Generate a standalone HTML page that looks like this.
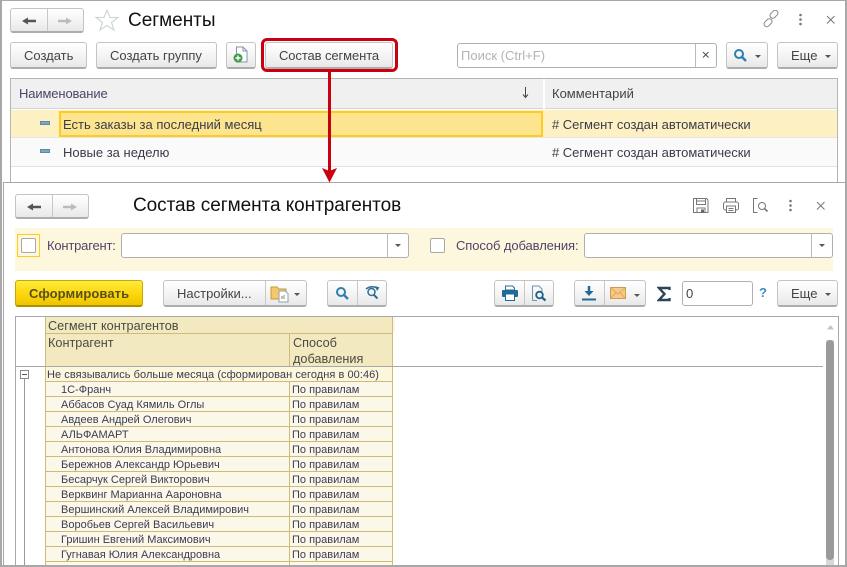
<!DOCTYPE html>
<html><head><meta charset="utf-8"><style>
html,body{margin:0;padding:0;background:#fff}
#p{position:relative;width:847px;height:567px;overflow:hidden;background:#fff;font-family:"Liberation Sans",sans-serif;color:#4a4a4a}
#p div,#p span,#p svg{position:absolute;box-sizing:border-box}
.t{white-space:nowrap;line-height:16px}
.b{background:linear-gradient(#fff,#f6f6f6 45%,#e8e8e8);border:1px solid #c4c4c4;border-bottom:2px solid #adadad;border-radius:3px}
.f{font-size:13px;color:#444;margin-top:1px}
.r{left:45px;width:348px;height:15px;background:#fbf8ea;border-bottom:1px solid #cdbb76;border-right:1px solid #cdbb76;border-left:1px solid #cdbb76;font-size:11px;line-height:15px;color:#3c3c50;white-space:nowrap}
.r i{position:absolute;font-style:normal;left:15px;top:1px}
.r b{position:absolute;font-weight:normal;left:246px;top:1px}
.r u{position:absolute;left:243px;top:0;width:1px;height:15px;background:#cdbb76}
.in{background:#fff;border:1px solid #b0b0b0;border-radius:3px}
.v{width:1px;background:#c8c8c8}
.ar{width:0;height:0;border-left:3px solid transparent;border-right:3px solid transparent;border-top:3px solid #555}
.h{font-size:12.700px;color:#4a4a44;line-height:16px}
</style></head><body><div id="p">

<!-- window 1 frame -->
<div style="left:0;top:0;width:847px;height:182px;border:2px solid #a8a8a8;border-top-width:1px;border-bottom:0"></div>

<div class="b" style="left:10px;top:8px;width:74px;height:25px"></div>
<div class="v" style="left:47px;top:9px;height:22px"></div>
<svg style="left:20px;top:14px" width="60" height="14"><path d="M5 7H16" stroke="#555" stroke-width="2.500"/><path d="M2 7L8 3.500V10.500Z" fill="#555"/><path d="M38 7H49" stroke="#bbb" stroke-width="2.500"/><path d="M52 7L46 3.500V10.500Z" fill="#bbb"/></svg>
<svg style="left:94px;top:8px" width="26" height="24"><path d="M13 2L16 9.500H24L17.500 14.500L20 22L13 17.500L6 22L8.500 14.500L2 9.500H10Z" fill="none" stroke="#d0d7da" stroke-width="1.200"/></svg>
<div class="t" style="left:128px;top:11px;font-size:19px;line-height:20px;color:#111;letter-spacing:-.03px">Сегменты</div>

<svg style="left:762px;top:10px" width="18" height="18" fill="none" stroke="#8a8a8a" stroke-width="1"><rect x="7.500" y="1.500" width="9" height="5.500" rx="2.700" transform="rotate(-45 12 4.300)"/><rect x="1.500" y="10" width="9" height="5.500" rx="2.700" transform="rotate(-45 6 12.700)"/></svg>
<svg style="left:798px;top:13px" width="5" height="14" fill="#777"><circle cx="2.500" cy="2" r="1.300"/><circle cx="2.500" cy="6.500" r="1.300"/><circle cx="2.500" cy="11" r="1.300"/></svg>
<svg style="left:826px;top:15px" width="10" height="10" stroke="#777" stroke-width="1"><path d="M1 1L8.500 8.500M8.500 1L1 8.500"/></svg>

<div class="b" style="left:10px;top:42px;width:77px;height:27px"></div>
<div class="t f" style="left:24px;top:47px">Создать</div>
<div class="b" style="left:96px;top:42px;width:121px;height:27px"></div>
<div class="t f" style="left:110px;top:47px">Создать группу</div>
<div class="b" style="left:226px;top:42px;width:30px;height:27px"></div>
<svg style="left:232px;top:46px" width="18" height="18"><path d="M4.500 1H11L15 5V16H4.500Z" fill="#fff" stroke="#7f97a8"/><path d="M11 1V5H15" fill="none" stroke="#7f97a8"/><circle cx="6" cy="12" r="4.500" fill="#3f9b45"/><path d="M3.500 12H8.500M6 9.500V14.500" stroke="#fff" stroke-width="1.400"/></svg>
<div class="b" style="left:265px;top:42px;width:128px;height:27px"></div>
<div class="t f" style="left:279px;top:47px;letter-spacing:-.1px">Состав сегмента</div>
<div style="left:261px;top:38px;width:137px;height:34px;border:3px solid #c9000f;border-radius:6px"></div>

<div class="in" style="left:457px;top:43px;width:260px;height:25px"></div>
<div class="v" style="left:695px;top:44px;height:23px;background:#bbb"></div>
<div class="t" style="left:461px;top:48px;font-size:13px;color:#b3b3b8">Поиск (Ctrl+F)</div>
<svg style="left:702px;top:51px" width="8" height="8" stroke="#555" stroke-width="1.100"><path d="M1 1L6.500 6.500M6.500 1L1 6.500"/></svg>
<div class="b" style="left:726px;top:42px;width:42px;height:27px"></div>
<svg style="left:733px;top:48px" width="15" height="15" fill="none" stroke="#2c7fb0" stroke-width="2"><circle cx="6" cy="6" r="4"/><path d="M9 9L13 13" stroke-width="2.400"/></svg>
<div class="ar" style="left:755px;top:55px"></div>
<div class="b" style="left:777px;top:42px;width:61px;height:27px"></div>
<div class="t f" style="left:791px;top:47px">Еще</div>
<div class="ar" style="left:825px;top:55px"></div>

<!-- list -->
<div style="left:10px;top:78px;width:828px;height:104px;border:1px solid #b4b4b4;border-bottom:0"></div>
<div style="left:11px;top:79px;width:826px;height:30px;background:#f0f0f0;border-bottom:1px solid #d4d4d4"></div>
<div class="v" style="left:543px;top:79px;height:30px;background:#fff;width:2px"></div>
<div class="t f" style="left:19px;top:85px;color:#4c4668;letter-spacing:-.13px">Наименование</div>
<svg style="left:521px;top:87px" width="9" height="12" fill="none" stroke="#444" stroke-width="1"><path d="M4.500 0V9.500"/><path d="M2 7.500L4.500 10.500L7 7.500" stroke-width="1"/></svg>
<div class="t f" style="left:552px;top:85px">Комментарий</div>

<div style="left:11px;top:110px;width:826px;height:28px;background:#fdf1c4;border-bottom:1px solid #e6e6e6"></div>
<div style="left:59px;top:111px;width:484px;height:26px;background:#fde48e;border:2px solid #fdcb22"></div>
<div style="left:40px;top:121px;width:10px;height:4px;background:#7fa8c0;border:1px solid #5d8aa5"></div>
<div class="t f" style="left:63px;top:116px;color:#3b3b4a">Есть заказы за последний месяц</div>
<div class="t f" style="left:552px;top:116px;color:#3b3b4a;letter-spacing:-.03px"># Сегмент создан автоматически</div>
<div style="left:11px;top:138px;width:826px;height:29px;background:#fafafa;border-bottom:1px solid #e2e2e2"></div>
<div style="left:40px;top:149px;width:10px;height:4px;background:#7fa8c0;border:1px solid #5d8aa5"></div>
<div class="t f" style="left:63px;top:144px;color:#3b3b4a">Новые за неделю</div>
<div class="t f" style="left:552px;top:144px;color:#3b3b4a;letter-spacing:-.03px"># Сегмент создан автоматически</div>

<!-- window 2 -->
<div style="left:3px;top:182px;width:843px;height:385px;background:#fff;border:1px solid #a8a8a8;border-top-width:1.500px"></div>
<div style="left:845px;top:182px;width:2px;height:385px;background:#a8a8a8"></div>
<div style="left:0;top:182px;width:2px;height:385px;background:#a8a8a8"></div>

<!-- arrow -->
<div style="left:328px;top:71px;width:3px;height:100px;background:#c9000f"></div>
<svg style="left:322px;top:167px" width="16" height="16"><path d="M0 1L7.500 4L15 1L7.500 15.500Z" fill="#c9000f"/></svg>

<div class="b" style="left:15px;top:194px;width:74px;height:25px"></div>
<div class="v" style="left:52px;top:195px;height:22px"></div>
<svg style="left:25px;top:200px" width="60" height="14"><path d="M5 7H16" stroke="#555" stroke-width="2.500"/><path d="M2 7L8 3.500V10.500Z" fill="#555"/><path d="M38 7H49" stroke="#bbb" stroke-width="2.500"/><path d="M52 7L46 3.500V10.500Z" fill="#bbb"/></svg>
<div class="t" style="left:133px;top:196px;font-size:19px;line-height:20px;color:#111;letter-spacing:-.06px">Состав сегмента контрагентов</div>

<svg style="left:692px;top:197px" width="18" height="17" fill="none" stroke="#777" stroke-width="1"><path d="M1.500 1.500H14.500L16 3V15.500H1.500Z"/><path d="M4.500 1.500V7.500H13.500V1.500M4.500 4H13.500"/><rect x="5" y="11" width="8" height="4.500"/><rect x="9" y="12.500" width="3" height="3" fill="#666" stroke="none"/></svg>
<svg style="left:722px;top:197px" width="18" height="17" fill="none" stroke="#777" stroke-width="1"><path d="M4.500 5V1.500H13.500V5"/><rect x="1.500" y="5" width="15" height="8" rx="2"/><rect x="4.500" y="9" width="9" height="6.500" fill="#fff"/><path d="M6.500 11.500H11.500M6.500 13.500H11.500"/></svg>
<svg style="left:752px;top:197px" width="18" height="17" fill="none" stroke="#777" stroke-width="1"><path d="M5.500 1.500H1.500V15.500H5.500"/><circle cx="10" cy="9" r="3.500"/><path d="M12.500 11.500L15.500 14.500" stroke-width="1.600"/></svg>
<svg style="left:788px;top:199px" width="5" height="14" fill="#777"><circle cx="2.500" cy="2" r="1.300"/><circle cx="2.500" cy="6.500" r="1.300"/><circle cx="2.500" cy="11" r="1.300"/></svg>
<svg style="left:816px;top:201px" width="10" height="10" stroke="#777" stroke-width="1"><path d="M1 1L8.500 8.500M8.500 1L1 8.500"/></svg>

<!-- filter -->
<div style="left:15px;top:228px;width:818px;height:43px;background:#fdf8dd"></div>
<div style="left:17px;top:234px;width:23px;height:23px;border:1px solid #fdcb22"></div>
<div style="left:21px;top:238px;width:15px;height:15px;background:#fff;border:1px solid #a8a8a8;border-radius:2px"></div>
<div class="t f" style="left:47px;top:237px;color:#4c4668;letter-spacing:-.2px">Контрагент:</div>
<div class="in" style="left:121px;top:233px;width:288px;height:25px"></div>
<div class="v" style="left:387px;top:234px;height:23px;background:#bbb"></div>
<div class="ar" style="left:395px;top:244px"></div>
<div style="left:430px;top:238px;width:15px;height:15px;background:#fff;border:1px solid #a8a8a8;border-radius:2px"></div>
<div class="t f" style="left:456px;top:237px;color:#4c4668;letter-spacing:-.1px">Способ добавления:</div>
<div class="in" style="left:584px;top:233px;width:249px;height:25px"></div>
<div class="v" style="left:811px;top:234px;height:23px;background:#bbb"></div>
<div class="ar" style="left:819px;top:244px"></div>

<!-- toolbar -->
<div style="left:15px;top:280px;width:128px;height:27px;background:linear-gradient(#ffea3e,#fdd90d 50%,#f0c400);border:1px solid #c8a900;border-bottom:2px solid #ad9200;border-radius:3px"></div>
<div class="t" style="left:29px;top:286px;font-size:13px;font-weight:bold;color:#57501c;letter-spacing:.1px">Сформировать</div>
<div class="b" style="left:163px;top:280px;width:144px;height:27px"></div>
<div class="v" style="left:265px;top:281px;height:24px"></div>
<div class="t f" style="left:177px;top:285px">Настройки...</div>
<svg style="left:270px;top:283px" width="20" height="20"><path d="M1 4H7L9 6H16V16H1Z" fill="#f3ca6b" stroke="#c89a3a"/><path d="M9 8H15L18 10.500V19H9Z" fill="#fff" stroke="#8ba4b5"/><path d="M12 16V13" stroke="#d9534f"/><path d="M14 16V12" stroke="#5cab62"/></svg>
<div class="ar" style="left:294px;top:293px"></div>
<div class="b" style="left:327px;top:280px;width:60px;height:27px"></div>
<div class="v" style="left:357px;top:281px;height:24px"></div>
<svg style="left:335px;top:286px" width="15" height="15" fill="none" stroke="#2c7fb0" stroke-width="2"><circle cx="6" cy="6" r="4"/><path d="M9 9L13 13" stroke-width="2.400"/></svg>
<svg style="left:365px;top:284px" width="16" height="17" fill="none" stroke="#2a6f96" stroke-width="1.500"><circle cx="6.500" cy="8" r="3.500"/><path d="M9 11L12.500 14.500" stroke-width="2"/><path d="M1 5Q6 1 12 4"/><path d="M10 2L14.500 3.500L12 7" fill="#2a6f96" stroke="none"/></svg>

<div class="b" style="left:494px;top:280px;width:60px;height:27px"></div>
<div class="v" style="left:524px;top:281px;height:24px"></div>
<svg style="left:501px;top:285px" width="18" height="17"><path d="M4.500 1H11.500L13.500 3V5H4.500Z" fill="#fff" stroke="#2a6f96"/><rect x="1" y="5" width="16" height="7" rx="1" fill="#1f6a97"/><rect x="4.500" y="9" width="9" height="6.500" fill="#fff" stroke="#1f6a97"/></svg>
<svg style="left:531px;top:285px" width="16" height="17" fill="none"><path d="M1.500 15.500V1H8L11 4V7" stroke="#6f93aa"/><path d="M1.500 15.500H6" stroke="#6f93aa"/><circle cx="8.500" cy="10" r="3.300" stroke="#1f5f88" stroke-width="1.800"/><path d="M11 12.500L14.500 15.500" stroke="#1f5f88" stroke-width="2.200"/></svg>
<div class="b" style="left:574px;top:280px;width:72px;height:27px"></div>
<div class="v" style="left:604px;top:281px;height:24px"></div>
<svg style="left:581px;top:285px" width="16" height="16"><path d="M8 1V8" stroke="#1f6a97" stroke-width="2.500"/><path d="M3.500 6H12.500L8 11Z" fill="#1f6a97"/><path d="M1 14.500H15" stroke="#1f6a97" stroke-width="2"/></svg>
<svg style="left:610px;top:287px" width="16" height="12"><rect x=".5" y=".5" width="15" height="11" fill="#f6c987" stroke="#d39a4a"/><path d="M1 1L8 7L15 1M1 11L6 5.500M15 11L10 5.500" fill="none" stroke="#e0a85f"/></svg>
<div class="ar" style="left:634px;top:294px"></div>
<svg style="left:657px;top:286px" width="14" height="16"><path d="M12.500 4V2H2L7.500 8L2 14H12.500V12" fill="none" stroke="#2b4458" stroke-width="2.400"/></svg>
<div class="in" style="left:682px;top:281px;width:71px;height:25px"></div>
<div class="t f" style="left:686px;top:285px">0</div>
<div class="t" style="left:759px;top:285px;font-size:13px;font-weight:bold;color:#3d8fc0">?</div>
<div class="b" style="left:777px;top:280px;width:61px;height:27px"></div>
<div class="t f" style="left:791px;top:285px">Еще</div>
<div class="ar" style="left:825px;top:293px"></div>

<!-- report panel -->
<div style="left:15px;top:316px;width:824px;height:251px;border:1px solid #a8a8a8;border-bottom:0"></div>
<div style="left:45px;top:317px;width:348px;height:50px;background:#f3e9c0;border-left:1px solid #cdbb76;border-right:1px solid #cdbb76"></div>
<div style="left:393px;top:317px;width:2px;height:16px;background:#f7f7f2"></div>
<div style="left:45px;top:333px;width:348px;height:1px;background:#cdbb76"></div>
<div style="left:289px;top:334px;width:1px;height:33px;background:#cdbb76"></div>
<div class="t h" style="left:48px;top:318px">Сегмент контрагентов</div>
<div class="t h" style="left:48px;top:335px">Контрагент</div>
<div class="t h" style="left:293px;top:335px">Способ<br>добавления</div>
<div style="left:16px;top:366px;width:807px;height:1px;background:#a8a8a8"></div>

<div style="left:20px;top:370px;width:9px;height:9px;border:1px solid #8a8a8a;background:#fff"></div>
<div style="left:22px;top:374px;width:5px;height:1px;background:#555"></div>
<div style="left:24px;top:379px;width:1px;height:188px;background:#9a9a9a"></div>

<div class="r" style="top:367px;background:#fcf6dc"><i style="left:1px;letter-spacing:.05px">Не связывались больше месяца (сформирован сегодня в 00:46)</i></div>
<div class="r" style="top:382px"><i>1С-Франч</i><u></u><b>По правилам</b></div>
<div class="r" style="top:397px"><i>Аббасов Суад Кямиль Оглы</i><u></u><b>По правилам</b></div>
<div class="r" style="top:412px"><i>Авдеев Андрей Олегович</i><u></u><b>По правилам</b></div>
<div class="r" style="top:427px"><i>АЛЬФАМАРТ</i><u></u><b>По правилам</b></div>
<div class="r" style="top:442px"><i>Антонова Юлия Владимировна</i><u></u><b>По правилам</b></div>
<div class="r" style="top:457px"><i>Бережнов Александр Юрьевич</i><u></u><b>По правилам</b></div>
<div class="r" style="top:472px"><i>Бесарчук Сергей Викторович</i><u></u><b>По правилам</b></div>
<div class="r" style="top:487px"><i>Верквинг Марианна Аароновна</i><u></u><b>По правилам</b></div>
<div class="r" style="top:502px"><i>Вершинский Алексей Владимирович</i><u></u><b>По правилам</b></div>
<div class="r" style="top:517px"><i>Воробьев Сергей Васильевич</i><u></u><b>По правилам</b></div>
<div class="r" style="top:532px"><i>Гришин Евгений Максимович</i><u></u><b>По правилам</b></div>
<div class="r" style="top:547px"><i>Гугнавая Юлия Александровна</i><u></u><b>По правилам</b></div>
<div class="r" style="top:562px;border-bottom:0"><u></u></div>

<!-- scrollbar -->
<svg style="left:827px;top:325px" width="7" height="5"><path d="M3.500 0L7 4.500H0Z" fill="#c4c4c4"/></svg>
<div style="left:826px;top:340px;width:8px;height:226px;background:#d8d8d8"></div>
<div style="left:826px;top:340px;width:8px;height:220px;background:#9a9a9a;border-radius:4px"></div>

<!-- bottom edge -->
<div style="left:0;top:565px;width:847px;height:2px;background:#a8a8a8"></div>
</div></body></html>
